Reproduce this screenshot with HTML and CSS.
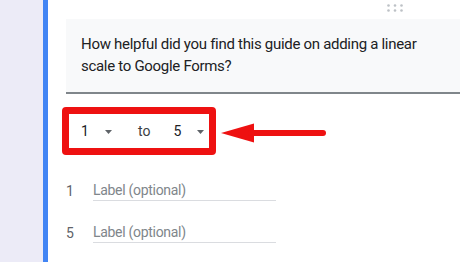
FILE: index.html
```html
<!DOCTYPE html>
<html lang="en">
<head>
    <meta charset="UTF-8">
    <meta name="viewport" content="width=device-width, initial-scale=1.0">
    <title>Linear scale</title>
    <link rel="stylesheet" href="styles.css">
</head>
<body>

<div class="sidebar"></div>

<div class="card">
    <div class="drag-row">
        <svg class="drag-handle" width="16" height="8" viewBox="0 0 16 8">
            <circle cx="1.5" cy="1.5" r="1.3"/>
            <circle cx="8" cy="1.5" r="1.3"/>
            <circle cx="14.5" cy="1.5" r="1.3"/>
            <circle cx="1.5" cy="6.5" r="1.3"/>
            <circle cx="8" cy="6.5" r="1.3"/>
            <circle cx="14.5" cy="6.5" r="1.3"/>
        </svg>
    </div>

    <div class="question">
        How helpful did you find this guide on adding a linear scale to Google Forms?
    </div>

    <div class="scale-row">
        <div class="scale-box">
            <span class="scale-value">1</span>
            <svg class="caret" width="7" height="4" viewBox="0 0 7 4"><path d="M0 0h7L3.5 4z"/></svg>
            <span class="scale-to">to</span>
            <span class="scale-value second">5</span>
            <svg class="caret" width="7" height="4" viewBox="0 0 7 4"><path d="M0 0h7L3.5 4z"/></svg>
        </div>
        <svg class="pointer" width="106" height="20" viewBox="0 0 106 20">
            <path d="M0 10L33 0.5V19.5z" fill="#ee1111"/>
            <line x1="30" y1="10" x2="102" y2="10" stroke="#ee1111" stroke-width="6" stroke-linecap="round"/>
        </svg>
    </div>

    <div class="label-row">
        <span class="label-num">1</span>
        <div class="label-field">Label (optional)</div>
    </div>
    <div class="label-row">
        <span class="label-num">5</span>
        <div class="label-field">Label (optional)</div>
    </div>
</div>

</body>
</html>
```

FILE: styles.css
```css
body {
    margin: 0;
    height: 262px;
    overflow: hidden;
    display: flex;
    font-family: Roboto, "Liberation Sans", Arial, sans-serif;
    color: #202124;
    background: white;
}

.sidebar {
    width: 43px;
    background: #ecebf7;
}

.card {
    flex: 1;
    border-left: 5px solid #4285f4;
    background: white;
}

.drag-row {
    height: 19px;
    display: flex;
    justify-content: flex-end;
    align-items: flex-start;
    padding-right: 71px;
    box-sizing: border-box;
}

.drag-handle {
    margin-top: 4px;
    fill: #bdc1c6;
}

.question {
    margin: 0 14px 0 18px;
    padding: 14px 10px 15px 15px;
    background: #f8f9fa;
    border-bottom: 2px solid #80868b;
    font-size: 15px;
    letter-spacing: -0.3px;
    line-height: 22px;
}

.scale-row {
    display: flex;
    align-items: center;
    margin: 13px 0 0 14px;
}

.scale-box {
    display: flex;
    align-items: center;
    height: 34px;
    padding: 0 5px 0 12px;
    border: 7px solid #ee1111;
    border-radius: 4px;
    font-size: 14px;
}

.scale-value {
    width: 8px;
}

.caret {
    fill: #5f6368;
    margin-left: 16px;
    margin-top: 1px;
}

.scale-to {
    margin-left: 26px;
    color: #3c4043;
}

.scale-value.second {
    margin-left: 23px;
}

.pointer {
    margin-left: 5px;
    margin-top: 4px;
}

.label-row {
    display: flex;
    align-items: flex-end;
    margin-left: 18px;
    font-size: 14px;
    line-height: 20px;
}

.scale-row + .label-row {
    margin-top: 25px;
}

.label-row + .label-row {
    margin-top: 21px;
}

.label-num {
    width: 27px;
    color: #5f6368;
}

.label-field {
    width: 183px;
    color: #80868b;
    letter-spacing: -0.3px;
    border-bottom: 1px solid #dadce0;
}
```
